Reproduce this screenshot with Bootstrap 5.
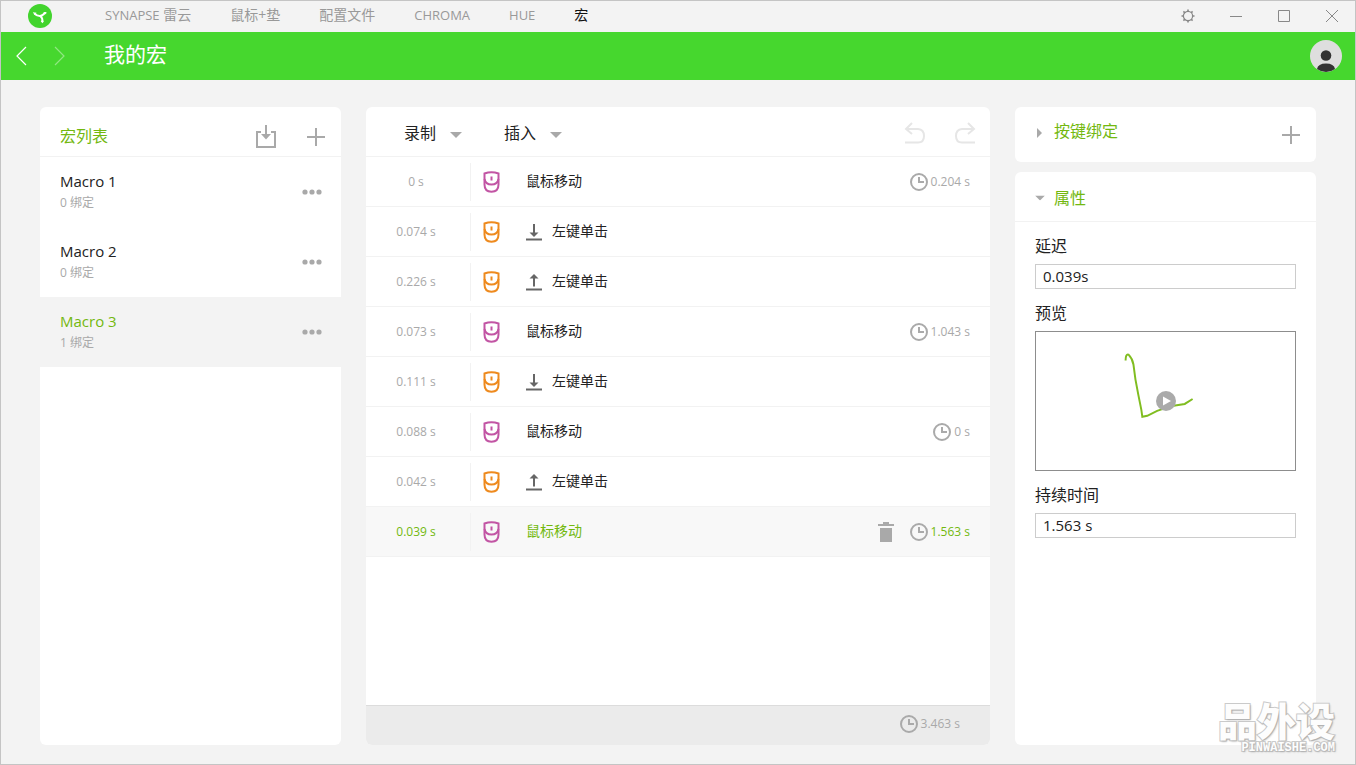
<!DOCTYPE html>
<html lang="zh-CN">
<head>
<meta charset="utf-8">
<meta name="viewport" content="width=device-width, initial-scale=1">
<title>我的宏</title>
<link href="https://cdn.jsdelivr.net/npm/bootstrap@5.3.0/dist/css/bootstrap.min.css" rel="stylesheet">
<style>
  :root { --lime: #73b80f; --brand: #46d72e; --soft: #a9a9a9; --rule: #f2f2f2; }
  body { font-family: "Open Sans", "Noto Sans CJK SC", sans-serif; font-size: 14px; line-height: 20px; color: #222; background: #f3f3f3; border: 1px solid #c4c4c4; }
  button { background: none; border: 0; padding: 0; color: inherit; display: inline-flex; align-items: center; line-height: inherit; }
  svg { display: block; flex: none; }
  .lime { color: var(--lime); }
  .soft { color: var(--soft); }

  .titlebar { height: 31px; padding-left: 27px; padding-right: 15px; }
  .titlebar svg { margin-bottom: 1px; }
  .tabs { margin-left: 53px; gap: 39px; padding-bottom: 3px; }
  .tabs a { color: #999; text-decoration: none; }
  .tabs a.active { color: #111; }
  .latin { font-size: 13px; }
  .window-tools { gap: 32px; color: #888; }
  .crumb { height: 48px; background: var(--brand); color: #fff; padding: 0 13px; }
  .crumb h1 { font-size: 21px; line-height: 28px; padding-bottom: 4px; margin-left: 38px; }
  .crumb .later { opacity: .4; }

  .workspace { display: grid; grid-template-columns: 301px minmax(0, 1fr) 301px; gap: 25px; padding: 27px 39px 19px; }
  .panel { background: #fff; border-radius: 6px; overflow: hidden; }
  .panel-head { height: 50px; border-bottom: 1px solid var(--rule); }
  .panel-head h2 { font-size: 16px; line-height: 24px; }

  .macro { height: 70px; padding: 0 19px 0 20px; }
  .macro.selected { background: #f3f3f3; }
  .macro-name { font-size: 15px; line-height: 22px; }
  .macro-sub { font-size: 12px; line-height: 22px; }
  .list-tools { gap: 30px; padding: 10px 16px 0 0; }

  .drop { font-size: 16px; gap: 14px; }
  .menus { padding: 2px 0 0 38px; gap: 42px; }
  .undo-tools { color: #e6e6e6; gap: 28px; padding: 2px 14px 0 0; }
  .undo-tools button:disabled { color: inherit; }

  .step { height: 50px; border-bottom: 1px solid var(--rule); padding-right: 20px; }
  .step.selected { background: #f8f8f8; color: var(--lime); }
  .stamp { width: 105px; height: 38px; border-right: 1px solid var(--rule); font-size: 12px; padding-right: 4px; color: var(--soft); }
  .device { width: 55px; padding-left: 12px; }
  .action { padding-bottom: 2px; }
  .key { color: #666; margin-right: 10px; }
  .pink { color: #c255a4; }
  .orange { color: #ee8a1e; }
  .span-time { font-size: 12px; gap: 3px; color: var(--soft); }
  .span-time svg { color: #aaa; }
  .selected .stamp, .selected .span-time { color: var(--lime); }
  .total { height: 40px; background: #ebebeb; border-top: 1px solid #dcdcdc; padding: 0 30px 4px 0; }

  .side-column { gap: 10px; }
  .binding { height: 55px; padding: 0 16px 0 20px; }
  .binding .fold { padding-bottom: 8px; }
  .fold { font-size: 16px; line-height: 24px; gap: 9px; }
  .panel-head .fold { padding: 2px 0 0 20px; }
  .fields { padding: 12px 20px; }
  .fields label, .fields .caption { display: block; font-size: 16px; line-height: 24px; }
  .fields input { height: 25px; font-size: 15px; line-height: 20px; border: 1px solid #ccc; border-radius: 0; padding: 0 7px 2px; color: #222; margin: 6px 0 12px; }
  .preview { height: 140px; border: 1px solid #8d8d8d; margin: 6px 0 12px; position: relative; }
  .preview button { position: absolute; inset: 0; margin: auto; width: 20px; height: 20px; }

  .watermark { position: absolute; right: 20px; bottom: 12px; color: #fdfdfd; text-align: right; pointer-events: none; text-shadow: 1px 1px 2px #aaa; -webkit-text-stroke: 2px #ccc; paint-order: stroke fill; }
  .watermark strong { display: block; font-weight: 900; font-size: 39px; line-height: 42px; padding-bottom: 2px; }
  .watermark span { display: block; font-family: "Liberation Mono", monospace; font-weight: 700; font-size: 12px; line-height: 8px; }
</style>
</head>
<body class="d-flex flex-column min-vh-100 position-relative">
<svg width="0" height="0" class="position-absolute" aria-hidden="true">
  <symbol id="mouse" viewBox="0 0 17 22"><g fill="none" stroke="currentColor" stroke-width="2"><path d="M1.500 2.500Q8.500 -.2 15.500 2.500V13.500Q15.500 20.700 8.500 20.700T1.500 13.500Z"/><path d="M1.500 8Q2.500 13.500 8.500 13.500T15.500 8M8.500 5.500V9.500"/></g></symbol>
  <symbol id="press" viewBox="0 0 16 18"><path d="M8 1V13M0 16.500H16" fill="none" stroke="currentColor" stroke-width="2"/><path d="M3.500 9.500H12.500L8 14Z" fill="currentColor"/></symbol>
  <symbol id="release" viewBox="0 0 16 18"><path d="M8 3V13.500M0 16.500H16" fill="none" stroke="currentColor" stroke-width="2"/><path d="M3.500 5.500H12.500L8 1Z" fill="currentColor"/></symbol>
  <symbol id="clock" viewBox="0 0 18 18"><g fill="none" stroke="currentColor" stroke-width="2"><circle cx="9" cy="9" r="8"/><path d="M9 4V9H14"/></g></symbol>
  <symbol id="plus" viewBox="0 0 18 18"><path d="M9 0V18M0 9H18" stroke="currentColor" stroke-width="2"/></symbol>
  <symbol id="dots" viewBox="0 0 20 6"><g fill="currentColor"><circle cx="3" cy="3" r="2.600"/><circle cx="10" cy="3" r="2.600"/><circle cx="17" cy="3" r="2.600"/></g></symbol>
  <symbol id="caret" viewBox="0 0 12 6"><path d="M0 0H12L6 6Z" fill="currentColor"/></symbol>
</svg>

<header>
  <div class="titlebar d-flex align-items-center">
    <svg width="24" height="24" viewBox="0 0 24 24" role="img" aria-label="Synapse"><circle cx="12" cy="12" r="12" fill="#42d42d"/><path d="M6.500 9.500Q9 12.200 12 12T17 8.500M12.300 12Q15 14 14.200 18" fill="none" stroke="#fff" stroke-width="2"/><path d="M4.800 8.300 8.600 8.700 6.600 11ZM15.500 8 18.500 8 18 10.500ZM12.700 17.300 16 16.800 14.500 19.300Z" fill="#fff"/></svg>
    <nav class="tabs d-flex align-items-baseline">
      <a href="#"><span class="latin">SYNAPSE</span> 雷云</a>
      <a href="#">鼠标+垫</a>
      <a href="#">配置文件</a>
      <a href="#" class="latin">CHROMA</a>
      <a href="#" class="latin">HUE</a>
      <a href="#" class="active" aria-current="page">宏</a>
    </nav>
    <div class="window-tools d-flex ms-auto">
      <button type="button" aria-label="设置"><svg width="16" height="16" viewBox="0 0 16 16" fill="none" stroke="currentColor"><circle cx="8" cy="8" r="4.600" stroke-width="1.200"/><path stroke-width="1.600" d="M8 1.500V3.500M8 12.500V14.500M1.500 8H3.500M12.500 8H14.500M3.400 3.400 4.800 4.800M11.200 11.200 12.600 12.600M3.400 12.600 4.800 11.200M11.200 4.800 12.600 3.400"/></svg></button>
      <button type="button" aria-label="最小化"><svg width="16" height="16" viewBox="0 0 16 16" stroke="currentColor"><path d="M2 8.500H14"/></svg></button>
      <button type="button" aria-label="最大化"><svg width="16" height="16" viewBox="0 0 16 16" stroke="currentColor" fill="none"><path d="M2.500 2.500H13.500V13.500H2.500Z"/></svg></button>
      <button type="button" aria-label="关闭"><svg width="16" height="16" viewBox="0 0 16 16" stroke="currentColor"><path d="M2 2 14 14M14 2 2 14"/></svg></button>
    </div>
  </div>
  <div class="crumb d-flex align-items-center">
    <button type="button" aria-label="后退"><svg width="14" height="20" viewBox="0 0 14 20" fill="none" stroke="currentColor" stroke-width="1.200"><path d="M12 1 3 10l9 9"/></svg></button>
    <button type="button" class="later ms-4" aria-label="前进"><svg width="14" height="20" viewBox="0 0 14 20" fill="none" stroke="currentColor" stroke-width="1.200"><path d="M3 1l9 9-9 9"/></svg></button>
    <h1 class="fw-normal mb-0">我的宏</h1>
    <button type="button" class="ms-auto" aria-label="用户"><svg width="32" height="32" viewBox="0 0 32 32"><circle cx="16" cy="16" r="16" fill="#dedede"/><g fill="#333"><circle cx="16" cy="15.500" r="5.300"/><path d="M7 29Q8 23.500 16 23.500T25 29Q21 32 16 32T7 29Z"/></g></svg></button>
  </div>
</header>

<main class="workspace flex-grow-1">
  <section class="panel">
    <div class="panel-head d-flex align-items-center ps-3">
      <h2 class="lime fw-normal mb-0 ms-1 pt-2">宏列表</h2>
      <div class="list-tools d-flex ms-auto">
        <button type="button" class="soft" aria-label="导入"><svg width="22" height="24" viewBox="0 0 22 24" fill="none" stroke="currentColor" stroke-width="2"><path d="M6 7H2V22H20V7H16M11 0V12"/><path d="M6 9H16L11 14.500Z" fill="currentColor" stroke="none"/></svg></button>
        <button type="button" class="soft" aria-label="新建"><svg width="18" height="18"><use href="#plus"/></svg></button>
      </div>
    </div>
    <div class="macro d-flex align-items-center">
      <div><div class="macro-name">Macro 1</div><div class="macro-sub soft">0 绑定</div></div>
      <button type="button" class="soft ms-auto" aria-label="Macro 1 菜单"><svg width="20" height="6"><use href="#dots"/></svg></button>
    </div>
    <div class="macro d-flex align-items-center">
      <div><div class="macro-name">Macro 2</div><div class="macro-sub soft">0 绑定</div></div>
      <button type="button" class="soft ms-auto" aria-label="Macro 2 菜单"><svg width="20" height="6"><use href="#dots"/></svg></button>
    </div>
    <div class="macro selected d-flex align-items-center">
      <div><div class="macro-name lime">Macro 3</div><div class="macro-sub soft">1 绑定</div></div>
      <button type="button" class="soft ms-auto" aria-label="Macro 3 菜单"><svg width="20" height="6"><use href="#dots"/></svg></button>
    </div>
  </section>

  <section class="panel d-flex flex-column">
    <div class="panel-head d-flex align-items-center">
      <div class="menus d-flex">
        <button type="button" class="drop">录制 <svg class="soft mt-1" width="12" height="6"><use href="#caret"/></svg></button>
        <button type="button" class="drop">插入 <svg class="soft mt-1" width="12" height="6"><use href="#caret"/></svg></button>
      </div>
      <div class="ms-auto d-flex undo-tools">
        <button type="button" aria-label="撤销" disabled><svg width="22" height="22" viewBox="0 0 22 22" fill="none" stroke="currentColor" stroke-width="2"><path d="M8 1 2 7l6 5M2 7H14Q20 7.500 20 14T14 20.500H1"/></svg></button>
        <button type="button" aria-label="重做" disabled><svg width="22" height="22" viewBox="0 0 22 22" fill="none" stroke="currentColor" stroke-width="2"><path d="M14 1 20 7l-6 5M20 7H8Q2 7.500 2 14T8 20.500H21"/></svg></button>
      </div>
    </div>
    <ol class="list-unstyled mb-0 flex-grow-1">
      <li class="step d-flex align-items-center"><span class="stamp d-flex align-items-center justify-content-center">0 s</span><span class="device pink"><svg width="17" height="22"><use href="#mouse"/></svg></span><span class="action">鼠标移动</span><span class="span-time ms-auto d-flex align-items-center"><svg width="18" height="18"><use href="#clock"/></svg>0.204 s</span></li>
      <li class="step d-flex align-items-center"><span class="stamp d-flex align-items-center justify-content-center">0.074 s</span><span class="device orange"><svg width="17" height="22"><use href="#mouse"/></svg></span><svg class="key" width="16" height="18"><use href="#press"/></svg><span class="action">左键单击</span></li>
      <li class="step d-flex align-items-center"><span class="stamp d-flex align-items-center justify-content-center">0.226 s</span><span class="device orange"><svg width="17" height="22"><use href="#mouse"/></svg></span><svg class="key" width="16" height="18"><use href="#release"/></svg><span class="action">左键单击</span></li>
      <li class="step d-flex align-items-center"><span class="stamp d-flex align-items-center justify-content-center">0.073 s</span><span class="device pink"><svg width="17" height="22"><use href="#mouse"/></svg></span><span class="action">鼠标移动</span><span class="span-time ms-auto d-flex align-items-center"><svg width="18" height="18"><use href="#clock"/></svg>1.043 s</span></li>
      <li class="step d-flex align-items-center"><span class="stamp d-flex align-items-center justify-content-center">0.111 s</span><span class="device orange"><svg width="17" height="22"><use href="#mouse"/></svg></span><svg class="key" width="16" height="18"><use href="#press"/></svg><span class="action">左键单击</span></li>
      <li class="step d-flex align-items-center"><span class="stamp d-flex align-items-center justify-content-center">0.088 s</span><span class="device pink"><svg width="17" height="22"><use href="#mouse"/></svg></span><span class="action">鼠标移动</span><span class="span-time ms-auto d-flex align-items-center"><svg width="18" height="18"><use href="#clock"/></svg>0 s</span></li>
      <li class="step d-flex align-items-center"><span class="stamp d-flex align-items-center justify-content-center">0.042 s</span><span class="device orange"><svg width="17" height="22"><use href="#mouse"/></svg></span><svg class="key" width="16" height="18"><use href="#release"/></svg><span class="action">左键单击</span></li>
      <li class="step selected d-flex align-items-center"><span class="stamp d-flex align-items-center justify-content-center">0.039 s</span><span class="device pink"><svg width="17" height="22"><use href="#mouse"/></svg></span><span class="action">鼠标移动</span><button type="button" class="soft ms-auto me-3" aria-label="删除"><svg width="16" height="20" viewBox="0 0 16 20" fill="currentColor"><path d="M0 2H5V0H11V2H16V4H0ZM2 6H14V20H2Z"/></svg></button><span class="span-time d-flex align-items-center"><svg width="18" height="18"><use href="#clock"/></svg>1.563 s</span></li>
    </ol>
    <footer class="total d-flex align-items-center justify-content-end"><span class="span-time d-flex align-items-center"><svg width="18" height="18"><use href="#clock"/></svg>3.463 s</span></footer>
  </section>

  <div class="d-flex flex-column side-column">
    <section class="panel binding d-flex align-items-center">
      <button type="button" class="fold" aria-expanded="false"><svg class="soft mt-1" width="10" height="10" viewBox="0 0 10 10"><path d="M2 0 7 5 2 10Z" fill="currentColor"/></svg><span class="lime">按键绑定</span></button>
      <button type="button" class="soft ms-auto" aria-label="添加绑定"><svg width="18" height="18"><use href="#plus"/></svg></button>
    </section>
    <section class="panel flex-grow-1">
      <div class="panel-head d-flex align-items-center">
        <button type="button" class="fold" aria-expanded="true"><svg class="soft" width="10" height="6" viewBox="0 0 12 6"><use href="#caret"/></svg><span class="lime">属性</span></button>
      </div>
      <form class="fields">
        <label for="delay">延迟</label>
        <input id="delay" class="form-control" type="text" value="0.039s">
        <div class="caption">预览</div>
        <div class="preview">
          <svg width="100%" height="138" viewBox="0 0 261 140" fill="none" stroke="#80bd20" stroke-width="2"><path d="M90 29q0-7 3-6 4 4 5 10l2 15 3 16 3 15 1 7 5 -1 10-5 15-5 13-2 8-5"/></svg>
          <button type="button" aria-label="播放"><svg width="20" height="20" viewBox="0 0 20 20"><circle cx="10" cy="10" r="10" fill="#aaa"/><path d="M7 5.500 15 10 7 14.500Z" fill="#fff"/></svg></button>
        </div>
        <label for="duration">持续时间</label>
        <input id="duration" class="form-control" type="text" value="1.563 s">
      </form>
    </section>
  </div>
</main>
<div class="watermark"><strong>品外设</strong><span>PINWAISHE.COM</span></div>
<script src="https://cdn.jsdelivr.net/npm/bootstrap@5.3.0/dist/js/bootstrap.bundle.min.js"></script>
</body>
</html>
